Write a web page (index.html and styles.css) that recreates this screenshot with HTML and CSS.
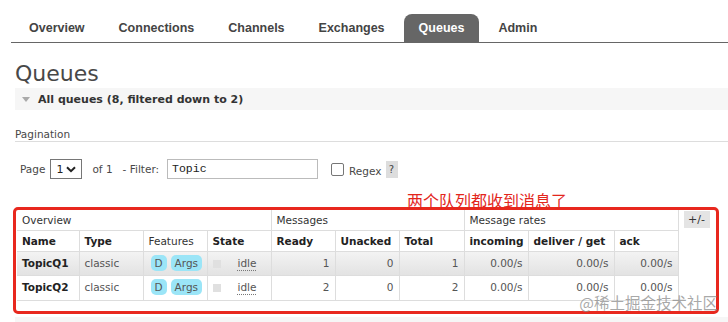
FILE: index.html
```html
<!DOCTYPE html>
<html>
	<head>
		<meta charset="UTF-8">
		<title>Queues</title>
		<link rel="stylesheet" href="styles.css">
	</head>
	<body>
		<div class="nav">
			<ul class="tabs">
				<li><a href="javascript:void(0)">Overview</a></li>
				<li><a href="javascript:void(0)">Connections</a></li>
				<li><a href="javascript:void(0)">Channels</a></li>
				<li><a href="javascript:void(0)">Exchanges</a></li>
				<li><a href="javascript:void(0)" class="active">Queues</a></li>
				<li><a href="javascript:void(0)">Admin</a></li>
			</ul>
		</div>
		<div class="main">
			<h1>Queues</h1>
			<div class="section">
				<h2 class="section-title"><span class="arrow-down"></span>All queues (8, filtered down to 2)</h2>
				<h3 class="pagination-title">Pagination</h3>
				<div class="filter-row">
					<label>Page</label>
					<span class="select"><span>1</span><svg width="10" height="7" viewBox="0 0 10 7"><path d="M1 1.2 L5 5.2 L9 1.2" fill="none" stroke="#222" stroke-width="2"/></svg></span>
					<label class="of">of 1</label>
					<label class="filter-label">- Filter:</label>
					<span class="filter-input">Topic</span>
					<span class="checkbox"></span>
					<label class="regex">Regex</label>
					<span class="help">?</span>
				</div>
				<!--截图标注-->
				<p class="note">两个队列都收到消息了</p>
				<div class="mark">
					<table class="list">
						<colgroup>
							<col style="width:62px"><col style="width:64px"><col style="width:64px"><col style="width:64px">
							<col style="width:64px"><col style="width:64px"><col style="width:65px">
							<col style="width:64px"><col style="width:86px"><col style="width:64px">
						</colgroup>
						<tr class="group">
							<th colspan="4">Overview</th>
							<th colspan="3">Messages</th>
							<th colspan="3">Message rates</th>
						</tr>
						<tr class="head">
							<th>Name</th>
							<th>Type</th>
							<th class="plain">Features</th>
							<th>State</th>
							<th>Ready</th>
							<th>Unacked</th>
							<th>Total</th>
							<th>incoming</th>
							<th>deliver / get</th>
							<th>ack</th>
						</tr>
						<tr class="alt1">
							<td class="name">TopicQ1</td>
							<td>classic</td>
							<td class="features"><span class="badge">D</span><span class="badge">Args</span></td>
							<td><span class="status"></span><span class="idle">idle</span></td>
							<td class="num">1</td>
							<td class="num">0</td>
							<td class="num">1</td>
							<td class="num">0.00/s</td>
							<td class="num">0.00/s</td>
							<td class="num">0.00/s</td>
						</tr>
						<tr class="alt2">
							<td class="name">TopicQ2</td>
							<td>classic</td>
							<td class="features"><span class="badge">D</span><span class="badge">Args</span></td>
							<td><span class="status"></span><span class="idle">idle</span></td>
							<td class="num">2</td>
							<td class="num">0</td>
							<td class="num">2</td>
							<td class="num">0.00/s</td>
							<td class="num">0.00/s</td>
							<td class="num">0.00/s</td>
						</tr>
					</table>
					<a href="javascript:void(0)" class="toggle">+/-</a>
				</div>
			</div>
			<div class="section">
				<h2 class="section-title"><span class="arrow-right"></span>Add a new queue</h2>
			</div>
		</div>
		<div class="watermark">@稀土掘金技术社区</div>
	</body>
</html>
```
FILE: styles.css
```css
body {
	margin: 0;
	font-family: "DejaVu Sans", Verdana, sans-serif;
	font-size: 10.5px;
	color: #484848;
	background: #fff;
}
ul,li,p,h1,h2,h3,table {
	margin: 0;
	padding: 0;
}
a {
	text-decoration: none;
	color: #484848;
}
/* 顶部导航 */
.nav {
	padding: 14px 0 0 11px;
}
.tabs {
	display: flex;
	gap: 4px;
	list-style: none;
	padding-left: 3px;
	border-bottom: 1px solid #666;
}
.tabs li a {
	display: block;
	padding: 0 15px;
	line-height: 28px;
	font-family: "Liberation Sans", Arial, sans-serif;
	font-size: 12.5px;
	font-weight: bold;
	color: #444;
	border-radius: 8px 8px 0 0;
}
.tabs li a.active {
	background: #666;
	color: #fff;
}
.main {
	padding-left: 15px;
}
h1 {
	margin: 18px 0 1px;
	font-size: 22px;
	font-weight: normal;
	line-height: 26px;
	color: #484848;
}
.section-title {
	display: flex;
	align-items: center;
	height: 22px;
	padding-left: 7px;
	background: #f6f6f6;
	font-size: 11px;
	font-weight: bold;
	color: #333;
}
.arrow-down {
	width: 0;
	height: 0;
	border-left: 4px solid transparent;
	border-right: 4px solid transparent;
	border-top: 5px solid #aaa;
	margin-right: 8px;
}
.arrow-right {
	width: 0;
	height: 0;
	border-top: 4px solid transparent;
	border-bottom: 4px solid transparent;
	border-left: 5px solid #aaa;
	margin: 0 8px 0 3px;
}
.pagination-title {
	margin-top: 17px;
	font-size: 10.5px;
	font-weight: normal;
	line-height: 14px;
	border-bottom: 1px solid #ddd;
}
/* 分页与过滤 */
.filter-row {
	display: flex;
	align-items: center;
	height: 20px;
	margin-top: 17px;
	padding-left: 5px;
}
.select {
	display: flex;
	align-items: center;
	justify-content: space-between;
	box-sizing: border-box;
	width: 32px;
	height: 20px;
	margin-left: 5px;
	padding: 0 5px 0 5px;
	border: 1px solid #767676;
	font-size: 11px;
	color: #222;
}
.select svg {
	flex-shrink: 0;
}
.of {
	margin-left: 10px;
}
.filter-label {
	margin-left: 10px;
}
.filter-input {
	box-sizing: border-box;
	width: 151px;
	height: 20px;
	margin-left: 8px;
	padding-left: 4px;
	border: 1px solid #bbb;
	font-family: "Liberation Mono", "Courier New", monospace;
	font-size: 11.5px;
	line-height: 18px;
	color: #222;
}
.checkbox {
	box-sizing: border-box;
	width: 13px;
	height: 13px;
	margin-left: 13px;
	border: 1px solid #767676;
	border-radius: 2px;
}
.regex {
	margin: 3px 0 0 5px;
}
.help {
	width: 12px;
	height: 17px;
	margin-left: 4px;
	background: #ddd;
	text-align: center;
	line-height: 17px;
	font-size: 10px;
	color: #444;
}
.note {
	margin-top: 12px;
	padding-left: 392px;
	font-family: "Noto Sans CJK SC", sans-serif;
	font-size: 16px;
	line-height: 18px;
	color: #e3261c;
}
/* 红框标注 */
.mark {
	display: flex;
	gap: 5px;
	width: fit-content;
	margin: -2px 0 0 -2px;
	padding: 0 6px 10px 1px;
	border: 3px solid #e8281e;
	border-radius: 5px;
}
.list {
	width: 661px;
	table-layout: fixed;
	border-collapse: collapse;
}
.list th, .list td {
	padding: 0 5px;
	border: 1px solid #ddd;
	text-align: left;
	white-space: nowrap;
}
.list tr:first-child th {
	border-top: none;
}
.list tr th:first-child, .list tr td:first-child {
	border-left: none;
}
.list tr.group th {
	height: 20px;
	font-weight: normal;
	color: #333;
}
.list tr.head th {
	height: 20px;
	font-weight: bold;
	color: #222;
}
.list tr.head th.plain {
	font-weight: normal;
	color: #333;
}
.list td {
	height: 21px;
	padding-bottom: 2px;
	color: #555;
}
.list tr.alt2 td {
	height: 22px;
}
.list tr.alt1 {
	background: linear-gradient(#f3f3f3, #e2e2e2);
}
.list td.name {
	font-weight: bold;
	color: #222;
}
.list td.num {
	text-align: right;
}
.list td.features {
	padding-left: 7px;
}
.badge {
	display: inline-block;
	height: 16px;
	margin-right: 4px;
	padding: 0 4px;
	border-radius: 5px;
	background: #9be5f7;
	line-height: 16px;
	color: #555;
	vertical-align: middle;
}
.status {
	display: inline-block;
	width: 8px;
	height: 8px;
	margin-right: 17px;
	background: #e0e0e0;
	vertical-align: middle;
}
.idle {
	text-decoration: underline dotted #777;
	text-underline-offset: 3px;
}
.toggle {
	align-self: flex-start;
	width: 26px;
	height: 17px;
	margin-top: 1px;
	background: #e4e4e4;
	text-align: center;
	line-height: 17px;
	font-size: 11px;
	color: #333;
}
.section + .section {
	margin-top: 3px;
}
.watermark {
	position: absolute;
	right: 10px;
	top: 291px;
	font-family: "Noto Sans CJK SC", sans-serif;
	font-size: 15.5px;
	color: rgba(140, 140, 140, 0.75);
}
```
